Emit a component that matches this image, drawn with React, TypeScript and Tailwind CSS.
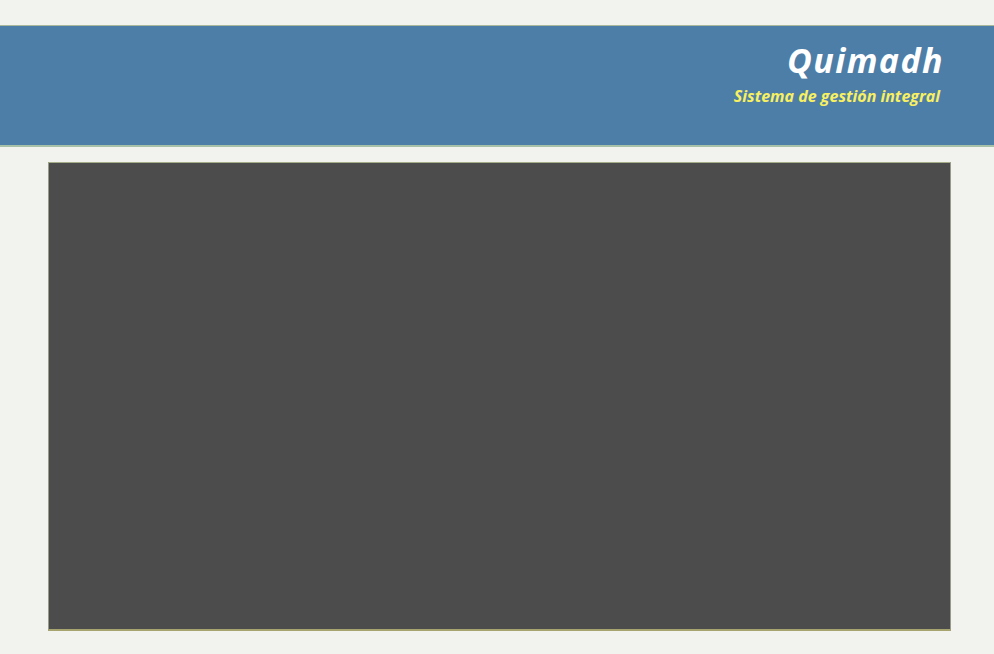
export default function App() {
  return (
    <div className="min-h-[654px] bg-[#f2f2ee] pt-[25px] pb-[23px]" style={{ fontFamily: '"Open Sans", "DejaVu Sans", sans-serif' }}>
      {/* Header */}
      <header className="h-[122px] bg-[#4d7ea8] border-t border-t-[#a9b89a] border-b-2 border-b-[#a7c0a8] flex flex-col items-end pr-[50px] pt-[14px]">
        <h1 className="text-[34px] leading-[40px] font-bold italic text-white tracking-[1.4px]">Quimadh</h1>
        <p className="text-[16px] leading-[20px] font-bold italic text-[#f8f060] mr-[4px] mt-[6px]">
          Sistema de gestión integral
        </p>
      </header>

      {/* Main panel */}
      <main className="mx-[48px] mt-[15px] h-[469px] w-[903px] bg-[#4c4c4c] border border-[#9a9a88] border-b-2 border-b-[#a8a470] border-t-[#a5ac88]" />
    </div>
  );
}
